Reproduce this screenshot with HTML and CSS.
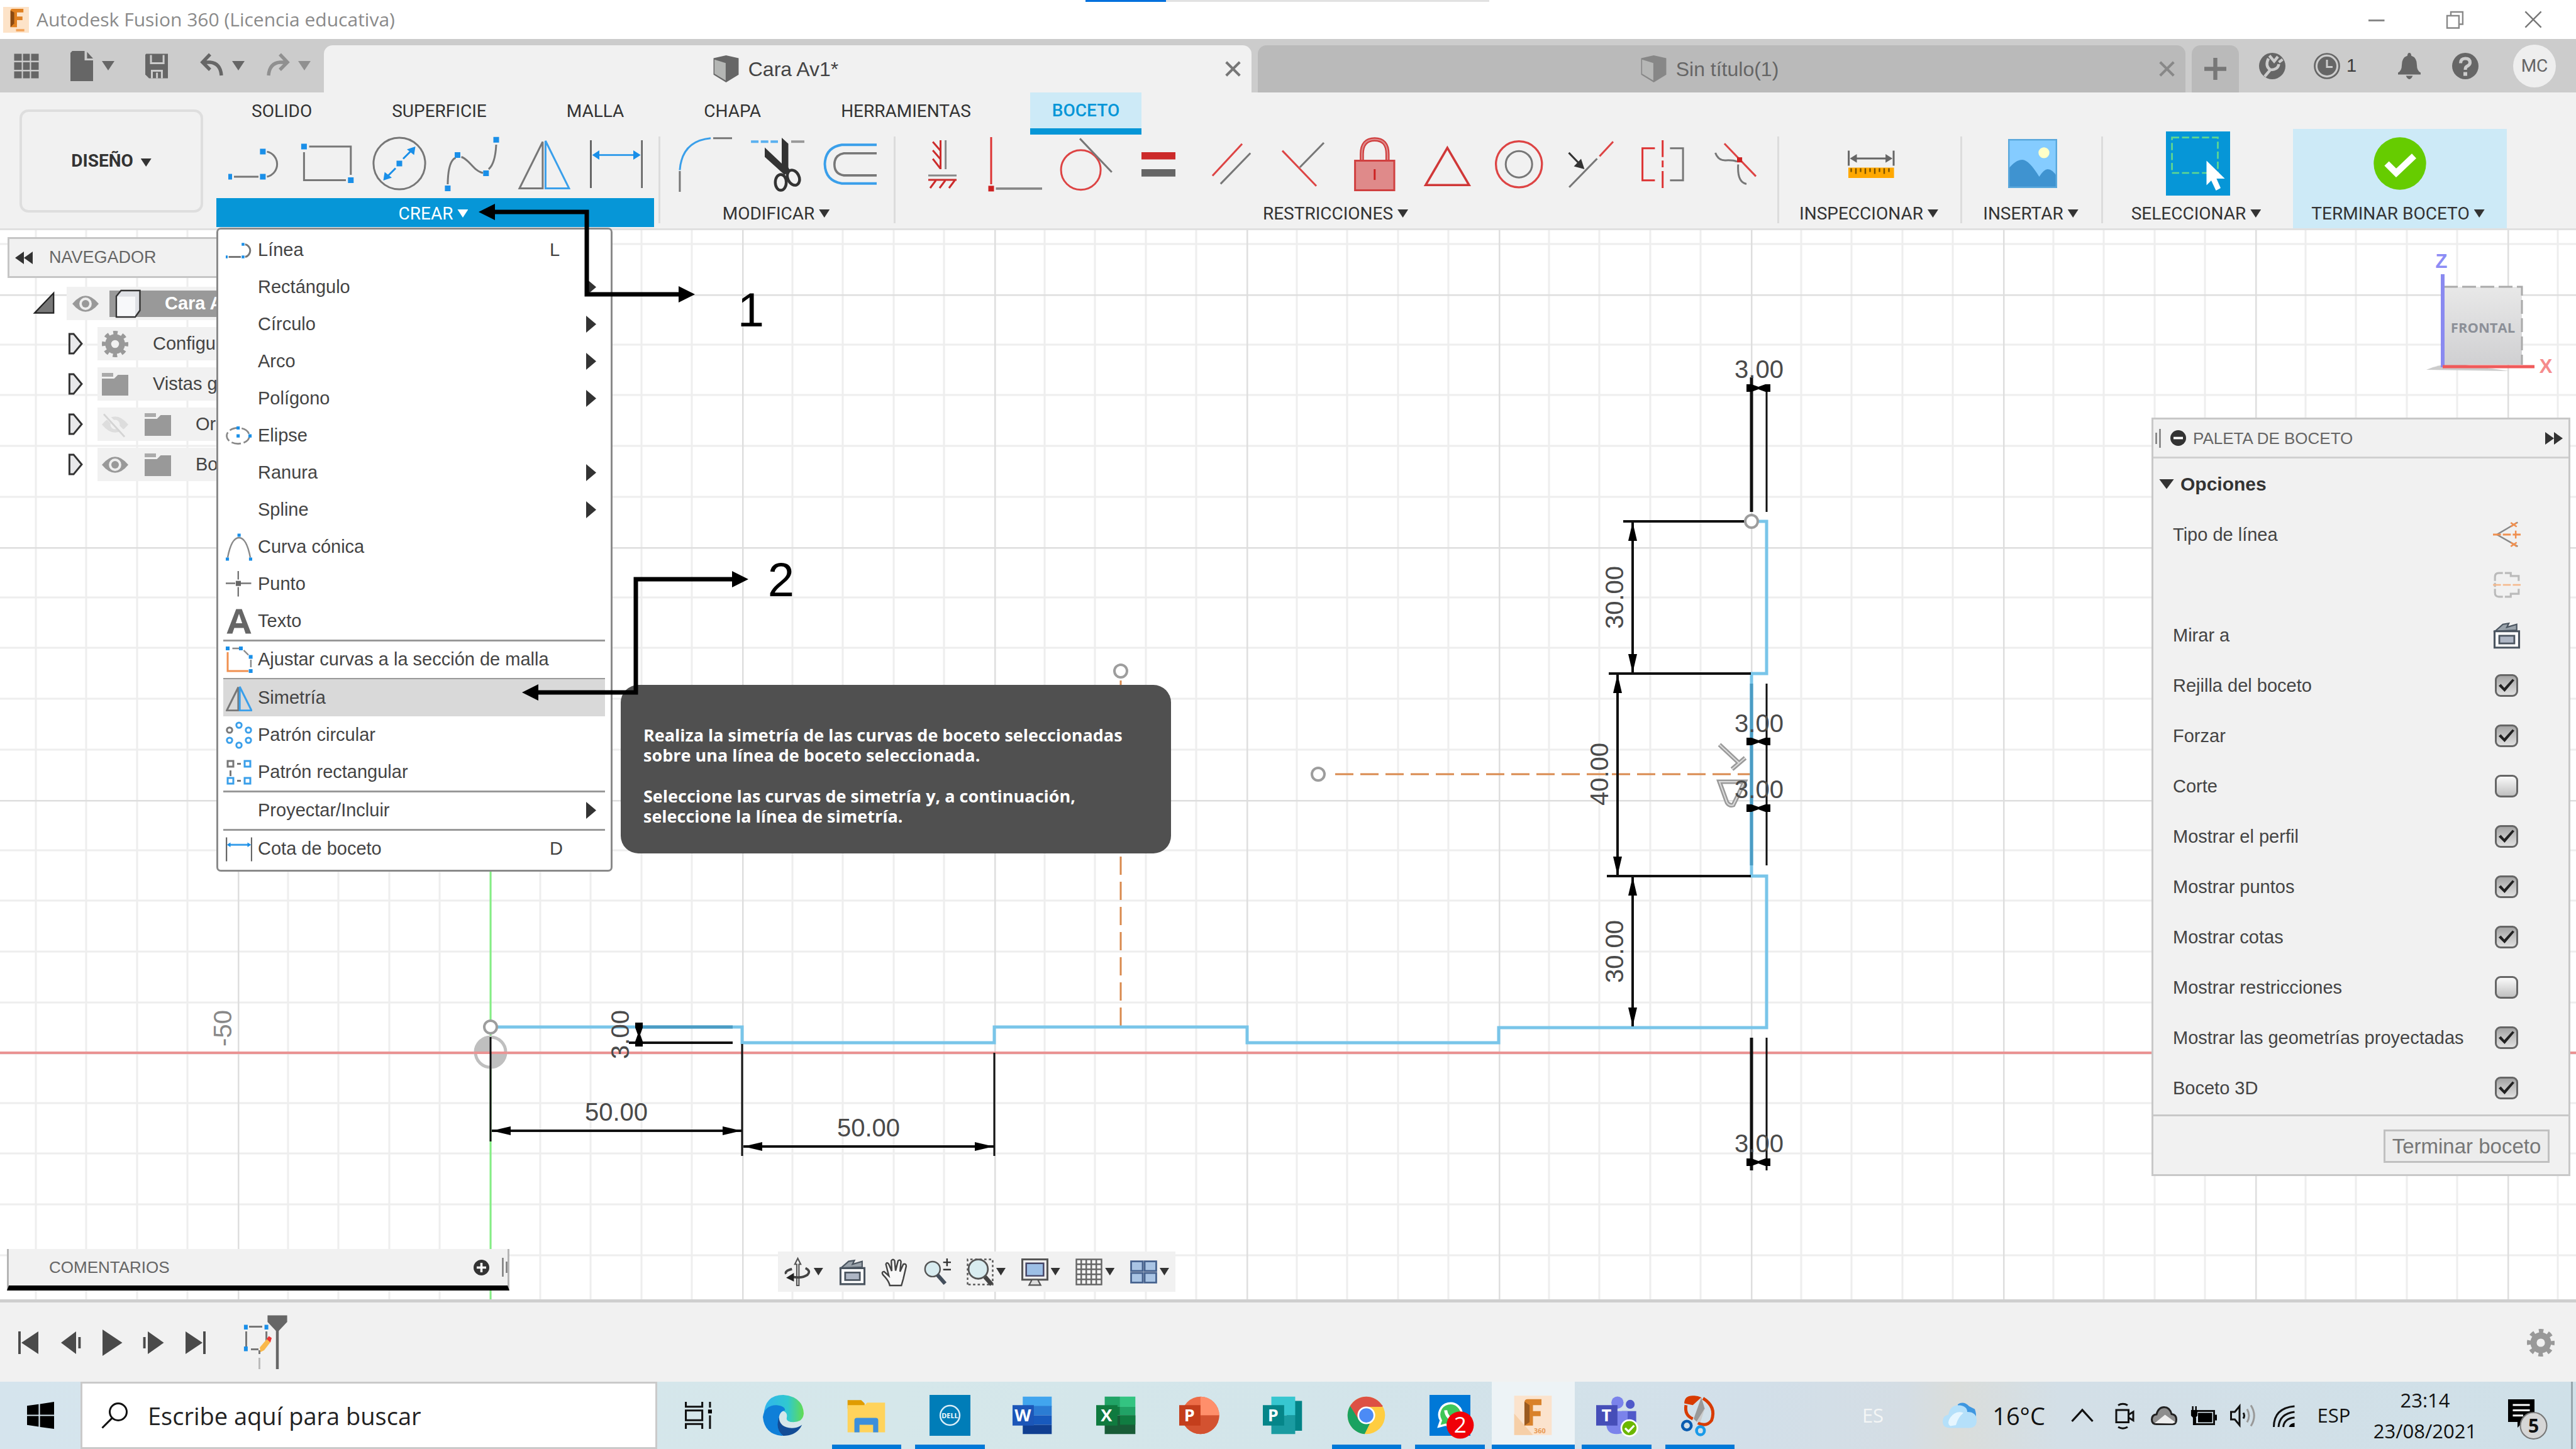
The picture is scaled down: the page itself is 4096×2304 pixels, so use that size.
FILE: index.html
```html
<!DOCTYPE html>
<html lang="es">
<head>
<meta charset="utf-8">
<title>Autodesk Fusion 360 (Licencia educativa)</title>
<meta name="viewport" content="width=device-width, initial-scale=1">
<link rel="stylesheet" href="styles.css">
</head>
<body>
<svg class="sprite" aria-hidden="true">
  <symbol id="i-cube" viewBox="0 0 14 14"><path d="M7 0 13.500 1.500V10L7 14 .5 10V1.500Z" fill="#666"/><path d="M1 2.200 6.800 4V13L1 9.500Z" fill="#b4b6b4"/></symbol>
  <symbol id="i-line" viewBox="0 0 28 28"><g fill="none" stroke="#777"><path d="M3 21H16M20.500 21A6.800 6.800 0 0 0 20.500 7.700"/></g><path d="M-1 19.500h3v3h-3zM16.800 19.500h3v3h-3zM16.800 6.200h3v3h-3z" fill="#1a8fe8"/></symbol>
  <symbol id="i-mirror" viewBox="0 0 28 28"><path d="M1 27.200H13.300V2.500Z" fill="none" stroke="#777"/><path d="M27.300 27.200H14.800V2Z" fill="none" stroke="#3a9fea"/></symbol>
  <symbol id="i-dim" viewBox="0 0 28 28"><path d="M.5 1.700V27M27.600 1.700V27" stroke="#666" fill="none"/><path d="M3 9.500H25" stroke="#3a9fea"/><path d="M1.200 9.500 5 7v5zM26.900 9.500 23 7v5z" fill="#1a8fe8"/></symbol>
  <symbol id="i-gear" viewBox="0 0 16 16"><g fill="none" stroke="#999"><circle cx="8" cy="8" r="4.200" stroke-width="3.600"/><circle cx="8" cy="8" r="6.700" stroke-width="2.600" stroke-dasharray="2.600 2.660" stroke-dashoffset="1.300"/></g></symbol>
  <symbol id="i-folder" viewBox="0 0 14 14"><path d="M0 4H6.500L8.500 2H14V13H0Z" fill="#999"/><path d="M0 1H6V3H0Z" fill="#aaa"/></symbol>
  <symbol id="i-eye" viewBox="0 0 14 14"><path d="M0 7Q7-1.500 14 7 7 15.500 0 7Z" fill="#999"/><circle cx="7" cy="7" r="3.300" fill="#eee"/><circle cx="7" cy="7" r="2" fill="#999"/></symbol>
  <symbol id="i-look" viewBox="0 0 14 14"><path d="M1 5 5 1.500 8 1 7 3 12 1.500V4.500Z" fill="#9aa3ab" stroke="#4b5560" stroke-width=".7"/><path d="M.8 5H13.200V13.300H.8Z" fill="#fff" stroke="#4b5560"/><path d="M3.200 7.300H10.800V11.200H3.200Z" fill="#aeb6c4" stroke="#4b5560" stroke-width=".9"/></symbol>
</svg>

<header class="titlebar">
  <svg class="app-logo" viewBox="0 0 14 14"><path d="M0 0H14V14H0Z" fill="#fde3c8"/><path d="M4 11V2Q4 1 5 1H11V3H7.500V5.200H10.500V7.200H7.500V11Z" fill="#e08020"/><path d="M4 11V2L6 3V9Z" fill="#8a4a12"/><path d="M7 12h4.500v1.300H7z" fill="#f3a55c"/></svg>
  <h1 class="title">Autodesk Fusion 360 (Licencia educativa)</h1>
  <span class="progress"><i></i></span>
  <button class="win" aria-label="Minimizar"><svg viewBox="0 0 10 10"><path d="M1 5.500H9.500" stroke="#888"/></svg></button>
  <button class="win" aria-label="Restaurar"><svg viewBox="0 0 10 10"><path d="M3 3V1H9.300V7.500H7.500M1 3H7.300V9.500H1Z" fill="none" stroke="#888" stroke-width=".8"/></svg></button>
  <button class="win" aria-label="Cerrar"><svg viewBox="0 0 10 10"><path d="M.8.8 9.200 9.200M9.200.8.8 9.200" stroke="#777" stroke-width=".8"/></svg></button>
</header>

<nav class="tabbar" aria-label="Documentos">
  <div class="qat">
    <button class="ic" aria-label="Datos"><svg viewBox="0 0 14 14"><path d="M.5.500h4v3.700h-4zM5.200.500h3.600v3.700h-3.600zM9.500.500h4v3.700h-4zM.5 5h4v4h-4zM5.200 5h3.600v4h-3.600zM9.500 5h4v4h-4zM.5 9.800h4v3.700h-4zM5.200 9.800h3.600v3.700h-3.600zM9.500 9.800h4v3.700h-4z" fill="#666"/></svg></button>
    <span class="pair"><button class="ic" aria-label="Archivo"><svg viewBox="0 0 14 14"><path d="M2-1H8.500V4H13V15H1V0Z" fill="#666"/><path d="M9.800-.5 13 3H9.800Z" fill="#666"/></svg></button><i class="caret g"></i></span>
    <button class="ic" aria-label="Guardar"><svg viewBox="0 0 14 14"><path d="M1.500.500H13V13.500H3L1 11.500V1Z" fill="#666"/><path d="M4 1.200V5.500H10.700V1.200M4.500 13.500V9.500H9.800V13.500M7.200 10.500v3" fill="none" stroke="#ccc"/></svg></button>
    <span class="pair"><button class="ic" aria-label="Deshacer"><svg viewBox="0 0 14 14"><path d="M6 .8 2 5 6 9M2.300 5H6Q11.500 5.500 12 12" fill="none" stroke="#666" stroke-width="1.800"/></svg></button><i class="caret g"></i></span>
    <span class="pair last"><button class="ic" aria-label="Rehacer"><svg viewBox="0 0 14 14"><path d="M8 .8 12 5 8 9M11.700 5H8Q2.500 5.500 2 12" fill="none" stroke="#909090" stroke-width="1.800"/></svg></button><i class="caret l"></i></span>
  </div>
  <div class="docs">
    <div class="doc on"><span class="name"><svg class="cube"><use href="#i-cube"/></svg>Cara Av1*</span><button class="x" aria-label="Cerrar"><svg viewBox="0 0 10 10"><path d="M1 1 9 9M9 1 1 9" stroke="#777" stroke-width="1.500"/></svg></button></div>
    <div class="doc"><span class="name"><svg class="cube"><use href="#i-cube" opacity=".6"/></svg>Sin título(1)</span><button class="x" aria-label="Cerrar"><svg viewBox="0 0 10 10"><path d="M1 1 9 9M9 1 1 9" stroke="#888" stroke-width="1.500"/></svg></button></div>
  </div>
  <button class="plus" aria-label="Nuevo diseño"><svg viewBox="0 0 12 12"><path d="M6 0V12M0 6H12" stroke="#777" stroke-width="2.200"/></svg></button>
  <div class="status">
    <button class="ic" aria-label="Extensiones"><svg viewBox="0 0 14 14"><circle cx="7" cy="7" r="7" fill="#666"/><path d="M5.500 1.500 8 4.500 10 2M10.500 5 12.500 3.500M5 3Q3 7 6 9L3 12.500M6 9Q10 9 10.500 6" fill="none" stroke="#ccc" stroke-width="1.500"/></svg></button>
    <span class="jobs"><button class="ic" aria-label="Estado de trabajos"><svg viewBox="0 0 14 14"><circle cx="7" cy="7" r="6.500" fill="none" stroke="#666" stroke-width=".9"/><circle cx="7" cy="7" r="5" fill="#666"/><path d="M7 3.700V7.500H10" fill="none" stroke="#ccc"/></svg></button>1</span>
    <button class="ic" aria-label="Notificaciones"><svg viewBox="0 0 14 14"><path d="M7 0Q8 0 8 1.500 11 2.500 11 6.500 11 9.500 13 10.500V11.500H1V10.500Q3 9.500 3 6.500 3 2.500 6 1.500 6 0 7 0ZM5.200 12.200H8.800Q8 14 7 14T5.200 12.200Z" fill="#666"/></svg></button>
    <button class="ic" aria-label="Ayuda"><svg viewBox="0 0 14 14"><circle cx="7" cy="7" r="7" fill="#666"/><path d="M4.500 5.500Q4.500 3 7 3T9.500 5.200Q9.500 6.400 7.800 7.200 7 7.600 7 9" fill="none" stroke="#ccc" stroke-width="1.700"/><path d="M6 10.200h2v2H6z" fill="#ccc"/></svg></button>
    <button class="avatar">MC</button>
  </div>
</nav>

<section class="ribbon">
  <button class="workspace">DISEÑO <i class="caret"></i></button>
  <div class="ribbon-main">
    <div class="modes">
      <button>SOLIDO</button><button>SUPERFICIE</button><button>MALLA</button><button>CHAPA</button><button>HERRAMIENTAS</button><button class="on">BOCETO</button>
    </div>
    <div class="groups">
      <div class="group create">
        <div class="tools">
          <svg><use href="#i-line"/></svg>
          <svg viewBox="0 0 28 28"><path d="M4.500 5H26.600V20M1.800 8V22.800H24" fill="none" stroke="#777"/><path d="M.3 3.500h3v3h-3zM25.100 21.300h3v3h-3z" fill="#1a8fe8"/></svg>
          <svg viewBox="0 0 28 28"><circle cx="14" cy="14" r="13.700" fill="none" stroke="#777"/><path d="M16 11.500 20 7.500M12 16.500 8 20.500" stroke="#1a8fe8"/><path d="M12.500 12.500h3v3h-3zM22.500 5 21.800 9.500 18 6.500ZM5.500 23 6.200 18.500 10 21.500Z" fill="#1a8fe8"/></svg>
          <svg viewBox="0 0 28 28"><path d="M1.300 25Q1.500 12.500 5.500 11M8.500 10.500C13 12 15 18 20 19M23 17Q26.500 14 27 4" fill="none" stroke="#777"/><path d="M-.2 25.700h3v3h-3zM5 8h3v3H5zM20.100 17.700h3v3h-3zM25.500-.1h3v3h-3z" fill="#1a8fe8"/></svg>
          <svg><use href="#i-mirror"/></svg>
          <svg><use href="#i-dim"/></svg>
        </div>
        <button class="label">CREAR <i class="caret"></i></button>
        <div class="menu" role="menu">
          <button role="menuitem"><svg><use href="#i-line"/></svg><span>Línea</span><kbd>L</kbd></button>
          <button role="menuitem"><svg></svg><span>Rectángulo</span><i class="sub"></i></button>
          <button role="menuitem"><svg></svg><span>Círculo</span><i class="sub"></i></button>
          <button role="menuitem"><svg></svg><span>Arco</span><i class="sub"></i></button>
          <button role="menuitem"><svg></svg><span>Polígono</span><i class="sub"></i></button>
          <button role="menuitem"><svg viewBox="0 0 14 14"><ellipse cx="6.500" cy="7" rx="6" ry="4.200" fill="none" stroke="#888" stroke-width=".9" stroke-dasharray="5 1.500"/><path d="M5.700 6.200h1.700v1.700H5.700zM12 6.200h1.700v1.700H12zM5.700 2h1.700v1.700H5.700z" fill="#1a8fe8"/></svg><span>Elipse</span></button>
          <button role="menuitem"><svg></svg><span>Ranura</span><i class="sub"></i></button>
          <button role="menuitem"><svg></svg><span>Spline</span><i class="sub"></i></button>
          <button role="menuitem"><svg viewBox="0 0 14 14"><path d="M1 12.500Q3 2 7 2T13 12.500" fill="none" stroke="#888" stroke-width=".8"/><path d="M0 12.500h1.700v1.700H0zM12.300 12.500H14v1.700h-1.700zM6.200-.2h1.700v1.700H6.200z" fill="#1a8fe8"/></svg><span>Curva cónica</span></button>
          <button role="menuitem"><svg viewBox="0 0 14 14"><path d="M0 6.500H5M8 6.500H13.500M6.600 0V4.500M6.600 8.500V13.500" stroke="#777" stroke-width=".8"/><path d="M5.300 5.200H8V7.900H5.300Z" fill="#666"/></svg><span>Punto</span></button>
          <button role="menuitem"><svg viewBox="0 0 14 14"><path d="M.5 13.500 5.500.500H8.500L13.500 13.500H10.500L9.500 10.500H4.500L3.500 13.500ZM5.300 8H8.700L7 3Z" fill="#666"/></svg><span>Texto</span></button>
          <hr>
          <button role="menuitem"><svg viewBox="0 0 14 14"><path d="M1 3V13H12" fill="none" stroke="#f09050"/><path d="M3.500 1H7M9.500 2 12 4.500M13.300 7V11" stroke="#888" stroke-width=".8" fill="none"/><path d="M0 0h2v2H0zM7 0h2v2H7zM12.200 4.500h2v2h-2zM12.200 12h2v2h-2z" fill="#1a8fe8"/></svg><span>Ajustar curvas a la sección de malla</span></button>
          <hr>
          <button role="menuitem" class="hover"><svg><use href="#i-mirror"/></svg><span>Simetría</span></button>
          <button role="menuitem"><svg viewBox="0 0 14 14"><g fill="none" stroke="#3a9fea"><circle cx="7" cy="1.700" r="1.400"/><circle cx="12" cy="4.300" r="1.400"/><circle cx="12" cy="9.700" r="1.400"/><circle cx="7" cy="12.300" r="1.400"/><circle cx="2" cy="9.700" r="1.400"/><circle cx="2" cy="4.300" r="1.400" stroke="#777"/></g></svg><span>Patrón circular</span></button>
          <button role="menuitem"><svg viewBox="0 0 14 14"><path d="M1 1h3v3H1zM6 2.500h2M2.500 6v3M6 11.500h2" fill="none" stroke="#777"/><path d="M10 1h3v3h-3zM10 10h3v3h-3zM1 10h3v3H1z" fill="none" stroke="#3a9fea"/></svg><span>Patrón rectangular</span></button>
          <hr>
          <button role="menuitem"><svg></svg><span>Proyectar/Incluir</span><i class="sub"></i></button>
          <hr>
          <button role="menuitem"><svg><use href="#i-dim"/></svg><span>Cota de boceto</span><kbd>D</kbd></button>
        </div>
      </div>
      <div class="group">
        <div class="tools">
          <svg viewBox="0 0 28 28"><path d="M.3 18V29M18 .6H28" stroke="#777"/><path d="M.3 17.500Q1.500 2 16.700.600" fill="none" stroke="#3a9fea"/></svg>
          <svg viewBox="0 0 28 28"><path d="M-.3 2.400H14" stroke="#5ab0f0" stroke-width="1.300" stroke-dasharray="4 1.200"/><path d="M21 2.400H28" stroke="#999" stroke-width="1.300"/><path d="M16 .3 19.500 3.500V16L20.500 18 17.500 20 7 10.500V5.500L16 14Z" fill="#333"/><ellipse cx="15.500" cy="24" rx="2.900" ry="4.200" fill="none" stroke="#333" stroke-width="1.500"/><ellipse cx="22.200" cy="21.500" rx="3" ry="4.200" transform="rotate(-25 22.200 21.500)" fill="none" stroke="#333" stroke-width="1.500"/></svg>
          <svg viewBox="0 0 28 28"><path d="M28 4.100H9.500Q.8 5.500.5 14.300.8 23.200 9.500 24.600H28" fill="none" stroke="#3a9fea" stroke-width="1.300"/><path d="M28 8.600H10.600Q5.600 9.500 5.600 14.500T10.600 20.300H28" fill="none" stroke="#777" stroke-width="1.200"/></svg>
        </div>
        <button class="label">MODIFICAR <i class="caret"></i></button>
      </div>
      <div class="group">
        <div class="tools">
          <svg viewBox="0 0 28 28"><path d="M17.200 1.700V17M8 20.300H23" stroke="#888" fill="none"/><path d="M14.500 1.700V17M10.400 2.500 14.300 7M10.400 7 14.300 11.500M10.400 11.500 14.300 16.500M8 22.700H23M12 23 9 27M17 23 14 27M22 23 19 27" stroke="#cc2b2b" fill="none"/></svg>
          <svg viewBox="0 0 28 28"><path d="M3 0V25" stroke="#d33"/><path d="M1.500 25.800h3v3h-3z" fill="#cc2222"/><path d="M5.500 27.300H30" stroke="#888" stroke-width="1.200"/></svg>
          <svg viewBox="0 0 28 28"><circle cx="12.200" cy="17.400" r="10.500" fill="none" stroke="#d44"/><path d="M11.700.800 28.600 18.600" stroke="#777"/></svg>
          <svg viewBox="0 0 28 28"><path d="M6 8H24V11.800H6Z" fill="#cc2a2a"/><path d="M6 17H24V20.900H6Z" fill="#666"/></svg>
          <svg viewBox="0 0 28 28"><path d="M5.300 20.500 21 3.600" stroke="#d44"/><path d="M9.600 24.800 25.400 8.500" stroke="#777"/></svg>
          <svg viewBox="0 0 28 28"><path d="M4 7.200 22 25.900" stroke="#d44"/><path d="M26 3 13.300 16" stroke="#777"/></svg>
          <svg viewBox="0 0 28 28"><path d="M7.800 12V9Q7.800 1.200 14.600 1.200T21.400 9V12" fill="none" stroke="#d04040" stroke-width="2.200"/><path d="M7.800 12V9Q7.800 1.200 14.600 1.200T21.400 9V12" fill="none" stroke="#df8a8a" stroke-width=".8"/><path d="M4.200 12.500H25V28.200H4.200Z" fill="#df8a8a" stroke="#d04040"/><path d="M14.600 17V22.700" stroke="#c22"/></svg>
          <svg viewBox="0 0 28 28"><path d="M14.800 5.700 26.300 25.400H3.300Z" fill="none" stroke="#d03838" stroke-width="1.200"/></svg>
          <svg viewBox="0 0 28 28"><circle cx="14.400" cy="14.400" r="12.200" fill="none" stroke="#d44" stroke-width="1.100"/><circle cx="14.400" cy="14.400" r="7" fill="none" stroke="#777"/></svg>
          <svg viewBox="0 0 28 28"><path d="M2.700 26.600 17.500 11.400" stroke="#777"/><path d="M18.800 10.200 26 2.400" stroke="#d44"/><path d="M2.500 8.300 8 14" stroke="#333"/><path d="M10.800 17 5.200 15.500 9 11.500Z" fill="#333"/></svg>
          <svg viewBox="0 0 28 28"><path d="M9.800 5.900H3.200V22.900H9.800M13.900 1.700V10.600M13.900 12.400V16M13.900 18V27" fill="none" stroke="#d33"/><path d="M17.800 5.900H24.700V22.900H17.800" fill="none" stroke="#777"/></svg>
          <svg viewBox="0 0 28 28"><path d="M3.500 8.300Q5 12.500 9 12.300T15 13M15.600 14.500Q15 24 20 24.800" fill="none" stroke="#777"/><path d="M8.300 3.400 25 20.800" stroke="#d44"/><path d="M15 10.700h2.700v2.700H15z" fill="#c22"/></svg>
        </div>
        <button class="label">RESTRICCIONES <i class="caret"></i></button>
      </div>
      <div class="group">
        <div class="tools"><svg viewBox="0 0 28 28"><path d="M2.200 7.200V15.200M26 7.200V15.200M5 11.300H23" stroke="#666" fill="none"/><path d="M2.800 11.300 6.500 9v4.600zM25.400 11.300 21.700 9v4.600z" fill="#666"/><path d="M2 16.200H26.200V21.700H2Z" fill="#ffa800"/><path d="M3.500 16.500v2M6 16.500v3M8.500 16.500v2M11 16.500v3M13.500 16.500v2M16 16.500v3M18.500 16.500v2M21 16.500v3M23.500 16.500v2" stroke="#7a5200" stroke-width=".8"/></svg></div>
        <button class="label">INSPECCIONAR <i class="caret"></i></button>
      </div>
      <div class="group">
        <div class="tools"><svg viewBox="0 0 28 28"><path d="M1 1H27V27H1Z" fill="#85ccff"/><path d="M1 17Q5 12 8.500 12 12 12 17.500 21 20 17 22 17 24.500 17 27 21V27H1Z" fill="#3f93d0"/><path d="M1.400 1.400H26.600V26.600H1.400Z" fill="none" stroke="#5aa8dc" stroke-width=".8"/><circle cx="20" cy="8.300" r="2.900" fill="#ffffc8"/></svg></div>
        <button class="label">INSERTAR <i class="caret"></i></button>
      </div>
      <div class="group">
        <div class="tools"><svg class="big" viewBox="0 0 34 34"><path d="M0 0H34V34H0Z" fill="#0696d7"/><path d="M3.200 3.200H27.500V22H3.200Z" fill="none" stroke="#60d890" stroke-width=".9" stroke-dasharray="3.800 1.500"/><path d="M21.500 15.500V28.500L24 26 26.500 31.300 29 30 26.800 25H31.200Z" fill="#fff"/></svg></div>
        <button class="label">SELECCIONAR <i class="caret"></i></button>
      </div>
      <div class="group finish">
        <div class="tools"><svg viewBox="0 0 28 28"><circle cx="14" cy="14" r="13.900" fill="#66cc00"/><path d="M7 14 12 19 21.500 10" fill="none" stroke="#fff" stroke-width="3.400"/></svg></div>
        <button class="label">TERMINAR BOCETO <i class="caret"></i></button>
      </div>
    </div>
  </div>
</section>

<main class="stage">
  <svg class="sketch" viewBox="0 366 4096 1700" preserveAspectRatio="xMinYMin slice">
    <defs>
      <pattern id="grid" x="378" y="66" width="401" height="402" patternUnits="userSpaceOnUse">
        <path d="M80 0V402M160 0V402M241 0V402M321 0V402M0 80H401M0 160H401M0 241H401M0 322H401" stroke="#eeeeee" stroke-width="3"/>
        <path d="M1 0V402M0 1H401" stroke="#dedede" stroke-width="3"/>
      </pattern>
      <marker id="arrow" viewBox="0 0 30 14" refX="30" refY="7" markerWidth="30" markerHeight="14" markerUnits="userSpaceOnUse" orient="auto-start-reverse"><path d="M0 0 30 7 0 14Z"/></marker>
      <linearGradient id="face" x2="0" y2="1"><stop offset="0" stop-color="#e8e8e8"/><stop offset="1" stop-color="#d0d0d2"/></linearGradient>
      <path id="tick" d="M-19-6H-11L0-2 11-6H19V6H11L0 2-11 6H-19Z"/>
    </defs>
    <rect y="366" width="4096" height="1700" fill="#fff"/>
    <rect y="366" width="4096" height="1700" fill="url(#grid)"/>
    <path d="M0 1674H4096" stroke="#ea9393" stroke-width="4"/>
    <path d="M780 366V2066" stroke="#83ee83" stroke-width="3"/>
    <g fill="none" stroke="#d98a4e" stroke-width="3" stroke-dasharray="29 11"><path d="M2123 1231H2784"/><path d="M1782 1082V1634"/></g>
    <circle cx="780" cy="1673" r="24" fill="#fff" stroke="#bfbfbf" stroke-width="5"/>
    <path d="M780 1673H754A26 26 0 0 1 780 1647ZM780 1673H806A26 26 0 0 1 780 1699Z" fill="#bfbfbf"/>
    <path d="M754 1674H806" stroke="#ea9393" stroke-width="4"/>
    <path d="M780 1633H1180V1658H1581V1633H1983V1658H2383V1634H2809V1393H2785V1071H2809V829H2785" fill="none" stroke="#79c5e9" stroke-width="5"/>
    <g stroke="#111" stroke-width="4" fill="none">
      <path d="M2581 829H2775M2558 1071H2784M2555 1393H2784"/>
      <path d="M780 1649V1815M1180 1660V1838M1581 1674V1838" stroke-width="3"/>
      <path d="M1000 1658H1165M1016 1626V1664"/>
      <path d="M2785 600V814M2785 1650V1861" stroke-width="5"/>
      <path d="M2809 617V814M2809 1087V1376M2809 1650V1861" stroke-width="3"/>
      <g marker-start="url(#arrow)" marker-end="url(#arrow)">
        <path d="M2596 830V1070"/><path d="M2572 1072V1392"/><path d="M2596 1394V1632"/>
        <path d="M782 1798H1179"/><path d="M1182 1823H1580"/>
      </g>
    </g>
    <path d="M1016 1633H1165M2785 1087V1376" stroke="#4b9cc4" stroke-width="5"/>
    <use href="#tick" x="2796" y="617"/><use href="#tick" x="2796" y="1179"/><use href="#tick" x="2796" y="1285"/><use href="#tick" x="2796" y="1848"/>
    <use href="#tick" transform="translate(1016 1645) rotate(90)"/>
    <g fill="none" stroke="#9a9a9a" stroke-width="7"><path d="M2734 1184 2766 1214M2754 1223 2775 1205"/><path d="M2734 1243H2774L2756 1280Q2750 1282 2746 1276Z"/></g>
    <g fill="none" stroke="#dcdcdc" stroke-width="2"><path d="M2734 1184 2766 1214M2754 1223 2775 1205"/><path d="M2734 1243H2774L2756 1280Q2750 1282 2746 1276Z"/></g>
    <g fill="#fff" stroke="#9d9d9d" stroke-width="4"><circle cx="780" cy="1633" r="10"/><circle cx="2785" cy="829" r="10"/><circle cx="2096" cy="1231" r="10"/><circle cx="1782" cy="1067" r="10"/></g>
    <g class="dims">
      <text x="2797" y="601">3.00</text><text x="2797" y="1164">3.00</text><text x="2797" y="1269">3.00</text><text x="2797" y="1832">3.00</text>
      <text x="980" y="1782">50.00</text><text x="1381" y="1807">50.00</text>
      <text transform="translate(2581 950) rotate(-90)">30.00</text>
      <text transform="translate(2557 1231) rotate(-90)">40.00</text>
      <text transform="translate(2581 1513) rotate(-90)">30.00</text>
      <text transform="translate(1000 1645) rotate(-90)">3.00</text>
      <text class="soft" transform="translate(368 1635) rotate(-90)">-50</text>
    </g>
    <g>
      <path d="M3858 588Q3884 576 3920 580L3990 590Z" fill="#ccc"/>
      <path d="M3886 456H4010V580H3886Z" fill="url(#face)"/>
      <path d="M3886 456H4010V580" fill="none" stroke="#aaa" stroke-width="3" stroke-dasharray="22 7"/>
      <path d="M3884 436V584" stroke="#8a8af0" stroke-width="6"/>
      <path d="M3884 583H4030" stroke="#f05a5a" stroke-width="5"/>
      <text class="face" x="3948" y="529">FRONTAL</text>
      <text class="axis z" x="3882" y="426">Z</text>
      <text class="axis x-axis" x="4048" y="593">X</text>
    </g>
  </svg>

  <aside class="browser">
    <h2><svg viewBox="0 0 14 10"><path d="M0 5 7 0V10ZM7 5 14 0V10Z" fill="#333"/></svg>NAVEGADOR</h2>
    <ul>
      <li class="root"><svg class="tw" viewBox="0 0 12 12"><path d="M11 0V11.500H0Z" fill="#777" stroke="#222" stroke-width=".8"/></svg><div><svg class="i"><use href="#i-eye"/></svg><b><svg class="i" viewBox="0 0 14 14"><path d="M1 3 3.500 0H13.500V10.500L11 14H1Z" fill="#dfe1e6" stroke="#333" stroke-width=".8"/><path d="M1.500 3.200H11V13.500H1.500Z" fill="#f7f8fa"/></svg>Cara A</b></div></li>
      <li><svg class="tw" viewBox="0 0 8 12"><path d="M.8.800H3L7.300 6 3 11.200H.8Z" fill="#e8e8ea" stroke="#333"/></svg><div><svg class="i"><use href="#i-gear"/></svg>Configu</div></li>
      <li><svg class="tw" viewBox="0 0 8 12"><path d="M.8.800H3L7.300 6 3 11.200H.8Z" fill="#e8e8ea" stroke="#333"/></svg><div><svg class="i"><use href="#i-folder"/></svg>Vistas g</div></li>
      <li class="deep"><svg class="tw" viewBox="0 0 8 12"><path d="M.8.800H3L7.300 6 3 11.200H.8Z" fill="#e8e8ea" stroke="#333"/></svg><div><svg class="i" viewBox="0 0 14 14"><path d="M0 7Q7-1.500 14 7 7 15.500 0 7Z" fill="#ddd"/><circle cx="7" cy="7" r="2.500" fill="#f1f1f1"/><path d="M1 1 13 13" stroke="#f1f1f1" stroke-width="2.500"/><path d="M1 1.500 12 13.500" stroke="#d4d4d4" stroke-width=".9"/></svg><svg class="i"><use href="#i-folder"/></svg>Ori</div></li>
      <li class="deep"><svg class="tw" viewBox="0 0 8 12"><path d="M.8.800H3L7.300 6 3 11.200H.8Z" fill="#e8e8ea" stroke="#333"/></svg><div><svg class="i"><use href="#i-eye"/></svg><svg class="i"><use href="#i-folder"/></svg>Bo</div></li>
    </ul>
  </aside>

  <div class="tooltip" role="tooltip">
    <p>Realiza la simetría de las curvas de boceto seleccionadas<br>sobre una línea de boceto seleccionada.</p>
    <p>Seleccione las curvas de simetría y, a continuación,<br>seleccione la línea de simetría.</p>
  </div>

  <aside class="palette">
    <h2><svg class="grip" viewBox="0 0 3 10"><path d="M.5 2V8M2.500 0V10" stroke="#777" stroke-width=".8"/></svg><svg class="min" viewBox="0 0 10 10"><circle cx="5" cy="5" r="5" fill="#333"/><path d="M2 5H8" stroke="#fff" stroke-width="1.500"/></svg><span>PALETA DE BOCETO</span><svg class="ff" viewBox="0 0 14 10"><path d="M14 5 7 0V10ZM7 5 0 0V10Z" fill="#333"/></svg></h2>
    <h3><i class="caret"></i>Opciones</h3>
    <div class="opt"><span>Tipo de línea</span><svg viewBox="0 0 14 14"><path d="M12.500.800 2 7 12.500 13" fill="none" stroke="#888" stroke-width=".8"/><path d="M0 7H14" stroke="#f09050" stroke-dasharray="4 1"/><path d="M9 1l3 2M9 3l3-2M9 11l3 2M9 13l3-2M11.500 5v4" stroke="#f09050" stroke-width=".8"/></svg></div>
    <div class="opt"><span></span><svg viewBox="0 0 14 14"><path d="M5 1H3Q1 1 1 3V5M1 6V8M1 9V11Q1 13 3 13H5M6 1H9V2.500H13V5M13 9V11.500H9V13H6" fill="none" stroke="#bbb"/><path d="M0 7H14" stroke="#f6b98c" stroke-width=".8" stroke-dasharray="4 1"/></svg></div>
    <div class="opt"><span>Mirar a</span><svg><use href="#i-look"/></svg></div>
    <label class="opt"><span>Rejilla del boceto</span><input type="checkbox" checked></label>
    <label class="opt"><span>Forzar</span><input type="checkbox" checked></label>
    <label class="opt"><span>Corte</span><input type="checkbox"></label>
    <label class="opt"><span>Mostrar el perfil</span><input type="checkbox" checked></label>
    <label class="opt"><span>Mostrar puntos</span><input type="checkbox" checked></label>
    <label class="opt"><span>Mostrar cotas</span><input type="checkbox" checked></label>
    <label class="opt"><span>Mostrar restricciones</span><input type="checkbox"></label>
    <label class="opt"><span>Mostrar las geometrías proyectadas</span><input type="checkbox" checked></label>
    <label class="opt"><span>Boceto 3D</span><input type="checkbox" checked></label>
    <footer><button>Terminar boceto</button></footer>
  </aside>

  <div class="comments"><span>COMENTARIOS</span><svg class="add" viewBox="0 0 10 10"><circle cx="5" cy="5" r="5" fill="#333"/><path d="M5 2V8M2 5H8" stroke="#fff" stroke-width="1.400"/></svg><svg class="grip" viewBox="0 0 3 10"><path d="M.5 0V10M2.500 2V8" stroke="#777" stroke-width=".8"/></svg></div>

  <div class="navtools">
    <svg viewBox="0 0 14 14"><path d="M6.500 14V3H5.500L7 0 8.500 3H7.600V14Z" fill="#fff" stroke="#555" stroke-width=".7"/><path d="M11 5Q14 6.500 12 8.500 9 10.500 4 9.500M4 5.500Q0 6.500 1 8" fill="none" stroke="#444" stroke-width="1.200"/><path d="M1 10 5 7.500V12Z" fill="#222"/></svg><i class="caret"></i>
    <svg><use href="#i-look"/></svg>
    <svg viewBox="0 0 14 14"><path d="M4.500 14Q4 11.500 1 8.500 0 7 1.500 6.800L4 9 2.500 3Q3 1.500 4 3L5.500 6.500 5.300 1.200Q6.200 0 7 1.200L7.500 6.300 8.800 1.200Q10 .3 10.300 1.700L9.800 6.800 11.500 3Q13 2.500 13 4L11.500 10.500 10.500 14Z" fill="#f8f8f8" stroke="#444" stroke-width=".8"/></svg>
    <svg viewBox="0 0 14 14"><circle cx="4.500" cy="5.500" r="3.900" fill="#d8ecf0" stroke="#555" stroke-width=".8"/><path d="M7 8.500 11 13" stroke="#444f5c" stroke-width="2"/><path d="M12 0V4M10 2H14M10 5.800H14" stroke="#333" stroke-width=".8"/></svg>
    <svg viewBox="0 0 14 14"><path d="M.5 13.500V.500H13.500V13.500Z" fill="none" stroke="#555" stroke-width=".8" stroke-dasharray="1.200 1.200"/><circle cx="6" cy="5.500" r="5" fill="#d8ecf0" stroke="#555" stroke-width=".9"/><path d="M9.500 9.500 13 13.500" stroke="#444" stroke-width="2.200"/></svg><i class="caret"></i>
    <svg viewBox="0 0 14 14"><path d="M.5.500H13.500V11H.5Z" fill="#eee" stroke="#555"/><path d="M2.500 2.500H11.500V9H2.500Z" fill="#9dbfe6" stroke="#446" stroke-width=".8"/><path d="M5.500 11h3l1.500 2.800H4Z" fill="#ddd" stroke="#555" stroke-width=".7"/></svg><i class="caret"></i>
    <svg viewBox="0 0 14 14"><path d="M.5.500H13.500V13.500H.5ZM.5 3H13.500M.5 5.600H13.500M.5 8.200H13.500M.5 10.800H13.500M3 .5V13.500M5.600.500V13.500M8.200.500V13.500M10.800.500V13.500" fill="#f4f4f4" stroke="#666" stroke-width=".8"/></svg><i class="caret"></i>
    <svg viewBox="0 0 14 14"><path d="M.5 1.500H6.500V6.500H.5ZM7.500 1.500H13.500V6.500H7.500ZM.5 7.500H6.500V12.500H.5ZM7.500 7.500H13.500V12.500H7.500Z" fill="#a9c4e4" stroke="#46628e" stroke-width=".9"/></svg><i class="caret"></i>
  </div>
</main>

<section class="timeline">
  <button aria-label="Inicio"><svg viewBox="0 0 12 16"><path d="M1 2V14" stroke="#4a4a4a" stroke-width="1.300"/><path d="M11 2V14L2 8Z" fill="#4a4a4a"/></svg></button>
  <button aria-label="Atrás"><svg viewBox="0 0 12 16"><path d="M9 2V14L1 8Z" fill="#4a4a4a"/><path d="M10.800 5V11" stroke="#4a4a4a" stroke-width="1.300"/></svg></button>
  <button aria-label="Reproducir"><svg viewBox="0 0 12 16"><path d="M1 1V15L11.500 8Z" fill="#4a4a4a"/></svg></button>
  <button aria-label="Adelante"><svg viewBox="0 0 12 16"><path d="M3 2V14L11.500 8Z" fill="#4a4a4a"/><path d="M1.200 5V11" stroke="#4a4a4a" stroke-width="1.300"/></svg></button>
  <button aria-label="Fin"><svg viewBox="0 0 12 16"><path d="M1 2V14L10 8Z" fill="#4a4a4a"/><path d="M11 2V14" stroke="#4a4a4a" stroke-width="1.300"/></svg></button>
  <svg class="feature" viewBox="0 0 24 30"><path d="M3 6.500H10M1.500 9V17M12.200 9V14M4 18.500H8M8.500 19V21" fill="none" stroke="#777"/><path d="M.3 5.500h2v2.500h-2zM11.200 5.500h2v2.500h-2zM.3 17h2v2.500h-2z" fill="#1a8fe8"/><path d="M9 20 8.700 17.500 12.500 13 14.500 14.500 11 19Z" fill="#f9b84a"/><path d="M12.300 13 13.500 11.500 15 12.500 14.300 14.800Z" fill="#e33"/><path d="M8.500 23V29" stroke="#bbb"/><path d="M18 6V29" stroke="#666" stroke-width="1.500"/><path d="M12.800.500H23.200V4L18 9.500 12.800 4Z" fill="#666"/></svg>
  <button class="prefs" aria-label="Preferencias"><svg><use href="#i-gear"/></svg></button>
</section>

<footer class="taskbar">
  <button class="start" aria-label="Inicio"><svg viewBox="0 0 14 14"><path d="M0 2 6 1.200V6.700H0ZM6.700 1.100 14 0V6.700H6.700ZM0 7.300H6V12.900L0 12ZM6.700 7.300H14V14L6.700 13Z"/></svg></button>
  <label class="search"><svg viewBox="0 0 14 14"><circle cx="9" cy="5" r="4.500" fill="none" stroke="#111"/><path d="M5.800 8.200.5 13.500" stroke="#111"/></svg><input type="text" placeholder="Escribe aquí para buscar" aria-label="Buscar"></label>
  <button class="view" aria-label="Vista de tareas"><svg viewBox="0 0 14 14"><path d="M.5 0V2.500H9V0M.5 4.500H9V9.500H.5ZM.5 14V11.500H9V14M13 0V3M13 7V14" fill="none" stroke="#111"/><path d="M12 4h2v2h-2z"/></svg></button>
  <div class="apps">
    <button aria-label="Edge"><svg viewBox="0 0 24 24"><defs><linearGradient id="eg" x2="1"><stop offset="0" stop-color="#2fb4ee"/><stop offset=".6" stop-color="#30c8d0"/><stop offset="1" stop-color="#62dc50"/></linearGradient></defs><path d="M.5 12Q1 0 12 0 23.500 1 24 11 23.500 16 18 16 13.500 16 14 13.500 15 9 9 9 3 9 .5 12Z" fill="url(#eg)"/><path d="M0 13Q1 6 8 6 13 6.500 13 9 9 10 9.500 15 11 21 17 21.500 14 24 11 24 1 23 0 13Z" fill="#0f7fd8"/><path d="M9.500 13Q9.500 19 17 19.500 20.500 19.500 23 17.500 20 24 12 24 7 20 9.500 13Z" fill="#124c96"/></svg></button>
    <button class="run" aria-label="Explorador"><svg viewBox="0 0 24 24"><path d="M1 3H9L11 5V8H1Z" fill="#e09c00"/><path d="M1 6H11L12.500 4.500H23V22H1Z" fill="#ffd35c"/><path d="M5 22V15Q5 13.500 6.500 13.500H17.500Q19 13.500 19 15V22H16V17.500H8V22Z" fill="#3c8fdc"/></svg></button>
    <button class="run" aria-label="Dell"><svg viewBox="0 0 24 24"><path d="M0 0H24V24H0Z" fill="#007db8"/><circle cx="12" cy="12" r="5.700" fill="none" stroke="#d9eef8" stroke-width=".9"/><text x="12" y="13.500" class="tiny">DELL</text></svg></button>
    <button aria-label="Word"><svg viewBox="0 0 24 24"><path d="M6 1H23V7H6Z" fill="#41a5ee"/><path d="M6 6.500H23V12H6Z" fill="#2b7cd3"/><path d="M6 12H23V17.500H6Z" fill="#185abd"/><path d="M6 17.500H23V23H6Z" fill="#103f91"/><path d="M0 6H12.500V18H0Z" fill="#1c56b8"/><text x="6" y="15.500" class="app">W</text></svg></button>
    <button aria-label="Excel"><svg viewBox="0 0 24 24"><path d="M5 1H14V7H5Z" fill="#21a366"/><path d="M14 1H23V7H14Z" fill="#33c481"/><path d="M5 7H14V12H5Z" fill="#107c41"/><path d="M14 7H23V12H14Z" fill="#21a366"/><path d="M5 12H23V23H5Z" fill="#185c37"/><path d="M14 12H23V17.500H14Z" fill="#107c41"/><path d="M0 6H12.500V18H0Z" fill="#0f7a3f"/><text x="6" y="15.500" class="app">X</text></svg></button>
    <button aria-label="PowerPoint"><svg viewBox="0 0 24 24"><circle cx="12.500" cy="12" r="11" fill="#ed6c47"/><path d="M12.500 1A11 11 0 0 1 23.500 12H12.500Z" fill="#ff8f6b"/><path d="M1.500 12H23.500A11 11 0 0 1 1.500 12Z" fill="#d35230"/><path d="M0 6H12.500V18H0Z" fill="#c43e1c"/><text x="6" y="15.500" class="app">P</text></svg></button>
    <button aria-label="Publisher"><svg viewBox="0 0 24 24"><path d="M14 3.500H23V21H14Z" fill="#038387"/><path d="M5 1H19V12H5Z" fill="#37c6d0"/><path d="M5 12H19V23H5Z" fill="#1a9ba1"/><path d="M0 6H12.500V18H0Z" fill="#058589"/><text x="6" y="15.500" class="app">P</text></svg></button>
    <button class="run" aria-label="Chrome"><svg viewBox="0 0 24 24"><circle cx="12" cy="12" r="11" fill="#ffcd41"/><path d="M2.500 6.500A11 11 0 0 1 21.500 6.500L12 7 7 14.500Z" fill="#dd5144"/><path d="M2.500 6.500 7.500 14.500 14 17 11 23A11 11 0 0 1 2.500 6.500Z" fill="#1aa260"/><path d="M12 6.500H21.500" stroke="#dd5144"/><circle cx="12" cy="12" r="5.200" fill="#fff"/><circle cx="12" cy="12" r="4.200" fill="#4c8bf5"/></svg></button>
    <button class="run" aria-label="WhatsApp"><svg viewBox="0 0 24 24"><path d="M0 0H24V24H0Z" fill="#0078d7"/><path d="M5.500 18.500 6.700 15A6.600 6.600 0 1 1 9.500 17.500Z" fill="#3fc658" stroke="#fff" stroke-width="1.300"/><path d="M9.500 9Q10 14 15 14.500" fill="none" stroke="#fff" stroke-width="1.800"/><circle cx="18" cy="17.700" r="8" fill="#f00008"/><text x="18" y="22.300" class="badge">2</text></svg></button>
    <button class="run on" aria-label="Fusion 360"><svg viewBox="0 0 24 24"><path d="M1 .5H23V23.500H1Z" fill="#fbe3cd"/><path d="M1 11 12 23.500H1Z" fill="#f6cfa8"/><path d="M7 18V4.500Q7 2.500 9 2.500H17V6H12V9.500H16.500V12.500H12V18Z" fill="#d9822b"/><path d="M7 18V4L10 6V16Z" fill="#9a5a20"/><text x="16" y="22.500" class="tiny o">360</text></svg></button>
    <button class="run" aria-label="Teams"><svg viewBox="0 0 24 24"><circle cx="12.500" cy="4.500" r="3.600" fill="#7b83eb"/><circle cx="20" cy="5.500" r="2.600" fill="#5059c9"/><path d="M15 9.500H23.500V16Q23 20 18 20Z" fill="#5059c9"/><path d="M6 9.500H18.500V17Q18 23 12 23T6 17Z" fill="#7b83eb"/><path d="M0 6H12.500V18H0Z" fill="#464eb8"/><text x="6" y="15.500" class="app">T</text><circle cx="19.500" cy="19.500" r="4.700" fill="#6bb700" stroke="#fff"/><path d="M17 19.500 19 21.500 22.300 18" fill="none" stroke="#fff" stroke-width="1.200"/></svg></button>
    <button class="run" aria-label="Recortes"><svg viewBox="0 0 24 24"><path d="M3 5Q3 0 9 .5 11 .5 13 1.500L8 6Z" fill="#d83b01"/><path d="M14 2Q22 7 19 15 16 19 11 16.500M4 6Q3 12 8 14" fill="none" stroke="#d83b01" stroke-width="1.800"/><path d="M13 1.500 15 8 10.500 16 8.500 14Z" fill="#999"/><path d="M15 8 12.500 16H10Z" fill="#ccc"/><ellipse cx="4.500" cy="18" rx="2.600" ry="2.600" fill="none" stroke="#0a5cb0" stroke-width="1.700"/><ellipse cx="12.500" cy="21" rx="2.300" ry="2.400" fill="none" stroke="#1a9ae8" stroke-width="1.700"/></svg></button>
  </div>
  <div class="tray">
    <span class="ghost">ES</span>
    <svg viewBox="0 0 18 14"><path d="M8 1Q11-1 14 2L17 3.500Q19 9 15 9L8 6Z" fill="#3f97e0"/><path d="M4 13.500Q0 13.500 0 10 0 7 3 6.500 4 1 9 1.500 13 2 13 5 18 5 18 9.500 18 13.500 14 13.500Z" fill="#b5e0fa"/><path d="M4 12.500Q2 11 4 8 7 4 11 5.500Q8 8 7 12Z" fill="#e6f6ff"/></svg>
    <span class="temp">16°C</span>
    <svg viewBox="0 0 14 14"><path d="M1.500 10 7 4 12.500 10" fill="none" stroke="#111" stroke-width="1.100"/></svg>
    <svg viewBox="0 0 14 14"><path d="M3 4H9.500V10.500H3ZM9.500 6.500 12 5V9.500L9.500 8M4 1.500Q6.500 0 9 1.500M4 13Q6.500 14.500 9 13" fill="none" stroke="#111"/></svg>
    <svg viewBox="0 0 14 14"><path d="M3 11.500Q.5 11.500.5 9T3 6.300Q4 2.500 7 2.500 10 2.500 11 6.200 13.500 6.500 13.500 9T11.500 11.500Z" fill="#8e8e8e" stroke="#222"/><path d="M2 11 7.500 6.500 13 10.500 11.500 11.200Z" fill="#eee"/></svg>
    <svg viewBox="0 0 14 14"><path d="M3 4.500H12.500V11.500H2.500V8" fill="none" stroke="#111"/><path d="M4 5.500H11.500V10.500H4ZM13 6.500H14V9.500H13ZM.3 4H3.700V7L2.700 8V12H1.300V8L.3 7ZM.8 2h.8v2H.8zM2.500 2h.8v2h-.8z"/></svg>
    <svg viewBox="0 0 14 14"><path d="M.5 5H2.500L5 2V12L2.500 9H.5ZM7 5.500Q8 7 7 8.500" fill="none" stroke="#111"/><path d="M9 3.500Q11 7 9 10.500M11 1.500Q14.500 7 11 12.500" fill="none" stroke="#999"/></svg>
    <svg viewBox="0 0 14 14"><path d="M1.500 13Q1.500 3 12.500 2M4 13Q4.500 6 12.500 5M6.500 13Q7 8.500 12.500 8" fill="none" stroke="#111"/><path d="M9.500 13Q10 11 12.500 10.800V13Z"/></svg>
    <span class="lang">ESP</span>
    <time class="clock"><span>23:14</span><span>23/08/2021</span></time>
    <svg class="notif" viewBox="0 0 21 22"><path d="M0 0H14V12H8L5 15V12H0Z" fill="#000"/><path d="M2.500 3H11.500M2.500 5.800H11.500M2.500 8.600H8" stroke="#fff"/><circle cx="13.500" cy="14" r="7" fill="#d6d6d6" stroke="#777" stroke-width=".7"/><text x="13.500" y="17.700" class="five">5</text></svg>
    <span class="edge"></span>
  </div>
</footer>

<svg class="notes" viewBox="0 0 4096 2304" preserveAspectRatio="xMinYMin meet">
  <g fill="none" stroke="#000" stroke-width="7"><path d="M780 337H933V468H1085"/><path d="M850 1101H1011V921H1170"/></g>
  <path d="M761 337 787 324V350ZM1105 468 1079 455V481ZM830 1101 856 1088V1114ZM1190 921 1164 908V934Z"/>
  <text x="1194" y="519">1</text><text x="1242" y="948">2</text>
</svg>
</body>
</html>
```
FILE: styles.css
```css
* { box-sizing: border-box; }
html, body { margin: 0; height: 100%; }
body {
  position: relative;
  display: flex;
  flex-direction: column;
  min-height: 100vh;
  overflow: hidden;
  background: #f1f1f1;
  color: #3c3c3c;
  font: 29px/1 "Liberation Sans", Arial, sans-serif;
}
button { border: 0; padding: 0; margin: 0; background: none; color: inherit; font: inherit; }
h1, h2, h3, p, ul { margin: 0; padding: 0; }
h1, h2 { font-weight: normal; }
svg { display: block; overflow: visible; flex: none; }
.sprite { position: absolute; width: 0; height: 0; }
.caret { display: inline-block; width: 17px; height: 13px; background: #333; clip-path: polygon(0 0, 100% 0, 50% 100%); flex: none; }

/* title bar */
.titlebar { position: relative; display: flex; align-items: center; height: 62px; padding: 0 6px 0 5px; background: #fff; }
.app-logo { width: 41px; height: 41px; }
.title { flex: 1; margin-left: 12px; font: 30px/62px "Open Sans", "Noto Sans", sans-serif; color: #8a8a8a; }
.progress { position: absolute; top: 0; left: 1726px; width: 642px; height: 3px; background: #e2e2e2; }
.progress i { display: block; width: 128px; height: 3px; background: #0070dd; }
.win { display: grid; place-items: center; width: 125px; height: 62px; }
.win svg { width: 30px; height: 30px; }

/* document tabs */
.tabbar { display: flex; height: 85px; background: #cccccc; }
.qat { display: flex; align-items: center; gap: 46px; width: 515px; padding-left: 21px; flex: none; }
.ic svg { width: 42px; height: 42px; }
.pair { display: flex; align-items: center; gap: 11px; }
.pair.last { margin-left: -14px; }
.caret.g { width: 20px; height: 15px; background: #666; }
.caret.l { width: 20px; height: 15px; background: #909090; }
.docs { display: grid; grid-template-columns: 1fr 1fr; gap: 10px; flex: 1; padding-top: 10px; }
.doc { display: flex; align-items: center; background: #bababa; border-radius: 14px 14px 0 0; font-size: 32px; color: #666; }
.doc.on { background: #f1f1f1; color: #444; }
.name { display: flex; flex: 1; align-items: center; justify-content: center; gap: 14px; padding-left: 4px; }
.cube { width: 43px; height: 43px; }
.x { padding: 0 16px 0 0; }
.x svg { width: 27px; height: 27px; }
.plus { display: grid; place-items: center; width: 75px; margin: 10px 0 0 10px; background: #bababa; border-radius: 14px 14px 0 0; }
.plus svg { width: 35px; height: 35px; }
.status { display: grid; grid-template-columns: 106px 120px 90px 88px 132px; align-items: center; justify-items: center; width: 536px; }
.jobs { display: flex; align-items: center; gap: 10px; justify-self: start; padding-left: 13px; font-size: 29px; }
.avatar { width: 68px; height: 68px; border-radius: 50%; background: #eeeeee; font: 28px/68px Roboto, sans-serif; color: #666; }

/* ribbon */
.ribbon { display: flex; height: 219px; border-bottom: 3px solid #e0e0e0; font: 28px/1 Roboto, sans-serif; color: #333; position: relative; z-index: 3; }
.workspace { width: 292px; height: 164px; margin: 27px 21px 0 31px; border: 4px solid #dedede; border-radius: 14px; font: bold 28px/1 Roboto, sans-serif; flex: none; }
.workspace .caret { margin-left: 5px; }
.ribbon-main { flex: 1; display: flex; flex-direction: column; }
.modes { display: flex; gap: 61px; height: 58px; padding-left: 23px; align-items: flex-start; }
.modes button { height: 67px; padding: 0 33px 7px; }
.modes .on { position: relative; z-index: 1; padding: 0 35px; background: #cdeaf7; border-bottom: 10px solid #0696d7; color: #0696d7; font-weight: 500; }
.groups { display: grid; grid-template-columns: 706fr 374fr 1405fr 291fr 224fr 302fr 340fr 110fr; flex: 1; }
.group { position: relative; display: flex; flex-direction: column; }
.group::after { content: ""; position: absolute; right: 0; top: 12px; bottom: 8px; width: 3px; background: #dcdcdc; }
.group:nth-child(n+6)::after { display: none; }
.tools { display: flex; align-items: center; justify-content: center; gap: 31px; height: 110px; }
.tools svg { width: 84px; height: 84px; }
.tools .big { width: 102px; height: 102px; }
.label { display: flex; align-items: center; justify-content: center; gap: 7px; height: 46px; padding: 3px 6px 0 0; }
.create { padding-right: 10px; }
.create .label { background: #0696d7; color: #fff; }
.create .label .caret { background: #fff; }
.finish { background: #cdeaf7; }

/* drop-down menu */
.menu {
  position: absolute; top: 157px; left: 0; z-index: 5;
  width: 630px; padding: 3px 9px 4px 8px;
  background: #fff; border: 3px solid #8a8a8a; border-radius: 7px;
  font: 29px/1 "Liberation Sans", Arial, sans-serif; color: #444;
}
.menu button { display: flex; align-items: center; gap: 9px; width: 100%; height: 59px; padding: 0 14px 0 4px; text-align: left; }
.menu svg { width: 42px; height: 42px; }
.menu svg:has(use) { stroke-width: 2; }
.menu span { flex: 1; }
.menu kbd { width: 74px; font: inherit; }
.menu hr { height: 3px; margin: 0 0 -1px; border: 0; background: #999; }
.menu .hover { background: #d9d9d9; }
.sub { width: 16px; height: 27px; background: #333; clip-path: polygon(0 0, 100% 50%, 0 100%); }

/* drawing area */
.stage { position: relative; flex: 1; min-height: 0; overflow: hidden; }
.sketch { width: 100%; height: 100%; overflow: hidden; }
.dims { font: 40px "Liberation Sans", Arial, sans-serif; fill: #4a4a4a; text-anchor: middle; }
.soft { fill: #888; }
.face { font: bold 22px "Open Sans", sans-serif; fill: #8c9098; text-anchor: middle; }
.axis { font: bold 31px "Liberation Sans", sans-serif; text-anchor: middle; }
.z { fill: #8c8cf5; }
.x-axis { fill: #f58c8c; }

.browser { position: absolute; left: 12px; top: 11px; width: 420px; }
.browser h2 { display: flex; align-items: center; gap: 26px; height: 65px; padding-left: 9px; border: 3px solid #c6c6c6; background: #f1f1f1; font-size: 27px; color: #666; }
.browser h2 svg { width: 28px; height: 20px; }
.browser ul { list-style: none; padding-top: 14px; display: grid; gap: 11px; }
.browser li { display: flex; align-items: center; height: 53px; padding-left: 96px; }
.browser li.root { padding-left: 43px; }
.browser .tw { width: 24px; height: 37px; margin-right: 23px; }
.browser .root .tw { width: 33px; height: 33px; margin-right: 18px; }
.browser li div { display: flex; flex: 1; align-items: center; height: 53px; padding-left: 7px; background: #f1f1f1; color: #444; }
.browser .i { width: 42px; height: 42px; margin-right: 39px; }
.browser .deep .i:first-child { margin-right: 26px; }
.browser .deep .i { margin-right: 39px; }
.browser .root div .i:first-child { margin-right: 17px; }
.browser .root div { padding-left: 9px; }
.browser b { display: flex; flex: 1; align-items: center; height: 42px; padding-left: 8px; background: #999; color: #fff; white-space: nowrap; }
.browser .root div b .i:first-child { margin-right: 38px; }

.tooltip { position: absolute; left: 987px; top: 723px; width: 875px; height: 268px; padding: 64px 36px 0; border-radius: 28px; background: #505050; color: #fff; font: bold 27px/32px "Open Sans", "Noto Sans", sans-serif; white-space: nowrap; }
.tooltip p + p { margin-top: 33px; }

.palette { position: absolute; right: 9px; top: 298px; width: 666px; border: 3px solid #c8c8c8; background: #f1f1f1; color: #444; }
.palette h2 { display: flex; align-items: center; height: 62px; padding: 0 9px 0 3px; border-bottom: 3px solid #d0d0d0; font-size: 26px; color: #666; }
.palette h2 span { flex: 1; }
.grip { width: 9px; height: 30px; }
.palette .min { width: 25px; height: 25px; margin: 0 11px 0 15px; }
.ff { width: 28px; height: 20px; }
.palette h3 { display: flex; align-items: center; gap: 10px; height: 81px; padding-left: 9px; font-weight: bold; font-size: 30px; color: #333; }
.palette h3 .caret { width: 24px; height: 16px; }
.opt { display: flex; align-items: center; justify-content: space-between; height: 80px; padding: 0 76px 0 31px; }
.opt > svg { width: 44px; height: 44px; }
.opt input { appearance: none; position: relative; width: 37px; height: 36px; margin: 0 4px; border: 3px solid #666; border-radius: 9px; background: linear-gradient(#fafafa, #c0c0c0); }
.opt input:checked { background: linear-gradient(#a4a4a4, #e0e0e0); }
.opt input:checked::before { content: ""; position: absolute; inset: 3px; background: #222; clip-path: polygon(0 52%, 14% 40%, 36% 66%, 88% 6%, 100% 16%, 38% 92%); }
.palette footer { display: flex; justify-content: flex-end; margin-top: 2px; padding: 21px 30px 18px; border-top: 3px solid #c8c8c8; }
.palette footer button { width: 264px; height: 53px; border: 3px solid #c0c0c0; background: #ececec; font-size: 33px; color: #777; }

.comments { position: absolute; left: 11px; bottom: 14px; display: flex; align-items: center; width: 799px; height: 66px; padding: 0 0 0 64px; border: solid #b5b5b5; border-width: 0 3px; border-bottom: 8px solid #000; background: #f1f1f1; font-size: 26px; color: #666; }
.comments span { flex: 1; }
.add { width: 25px; height: 25px; margin-right: 20px; }
.navtools { position: absolute; left: 1237px; bottom: 12px; display: flex; align-items: center; justify-content: space-between; width: 632px; height: 64px; padding: 0 10px; background: #f1f1f1; }
.navtools svg { width: 43px; height: 43px; }
.navtools .caret { width: 15px; height: 12px; margin-left: -21px; }

/* timeline */
.timeline { display: flex; align-items: center; gap: 30px; height: 131px; padding: 2px 34px 0 28px; border-top: 5px solid #cfcfcf; background: #f1f1f1; }
.timeline button svg { width: 36px; height: 48px; }
.feature { width: 72px; height: 90px; margin-left: 29px; }
.prefs { margin-left: auto; }
.timeline .prefs svg { width: 44px; height: 44px; }

/* taskbar */
.taskbar { display: flex; height: 107px; background: linear-gradient(90deg, #d5e4ed, #d5e7ea 35%, #d3e5ea 50%, #d2dfe9 68%, #d4dde4 74%, #dadddb 76%, #d3dfe7 80%, #cfe0e8); font-family: "Open Sans", "Noto Sans", sans-serif; color: #111; }
.start { display: grid; place-items: center; width: 128px; }
.start svg, .view svg { width: 43px; height: 43px; }
.search { display: flex; align-items: center; gap: 32px; width: 917px; padding-left: 30px; border: 3px solid #cacaca; background: #fff; }
.search svg { width: 42px; height: 42px; }
.search input { flex: 1; border: 0; outline: 0; padding: 0; background: none; font: 38px "Open Sans", "Noto Sans", sans-serif; }
.search input::placeholder { color: #222; opacity: 1; }
.view { display: grid; place-items: center; width: 130px; margin-right: 4px; }
.apps { display: grid; grid-template-columns: repeat(12, 1fr); width: 1590px; }
.apps button { position: relative; display: grid; place-items: center; }
.apps svg { width: 65px; height: 65px; }
.apps .run::after { content: ""; position: absolute; bottom: 0; left: 11px; right: 11px; height: 7px; background: #0078d7; }
.apps .on { background: #edf3f6; }
.apps .run.on::after { left: 0; right: 0; }
.app { font: bold 10px "Open Sans", sans-serif; fill: #fff; text-anchor: middle; }
.tiny { font: bold 4px "Open Sans", sans-serif; fill: #fff; text-anchor: middle; }
.tiny.o { fill: #e79a55; }
.badge { font: 13px "Open Sans", sans-serif; fill: #fff; text-anchor: middle; }
.tray { display: grid; grid-template-columns: 222px 54px 134px 68px 64px 63px 63px 64px 66px 92px 198px 128px 13px; align-items: center; justify-items: center; margin-left: auto; font-size: 31px; }
.tray svg { width: 42px; height: 42px; }
.tray svg:nth-child(2) { width: 56px; }
.ghost { color: #f4f6f6; }
.temp { font-size: 38px; }
.clock { display: grid; gap: 12px; text-align: center; line-height: 37px; }
.tray .notif { width: 63px; height: 66px; margin-top: 14px; }
.five { font: bold 10px "Open Sans", sans-serif; fill: #111; text-anchor: middle; }
.edge { width: 3px; height: 100%; background: #98a6ad; }

/* tutorial call-outs */
.notes { position: absolute; inset: 0; z-index: 10; width: 100%; pointer-events: none; }
.notes text { font: 76px "Liberation Sans", Arial, sans-serif; text-anchor: middle; }
```
